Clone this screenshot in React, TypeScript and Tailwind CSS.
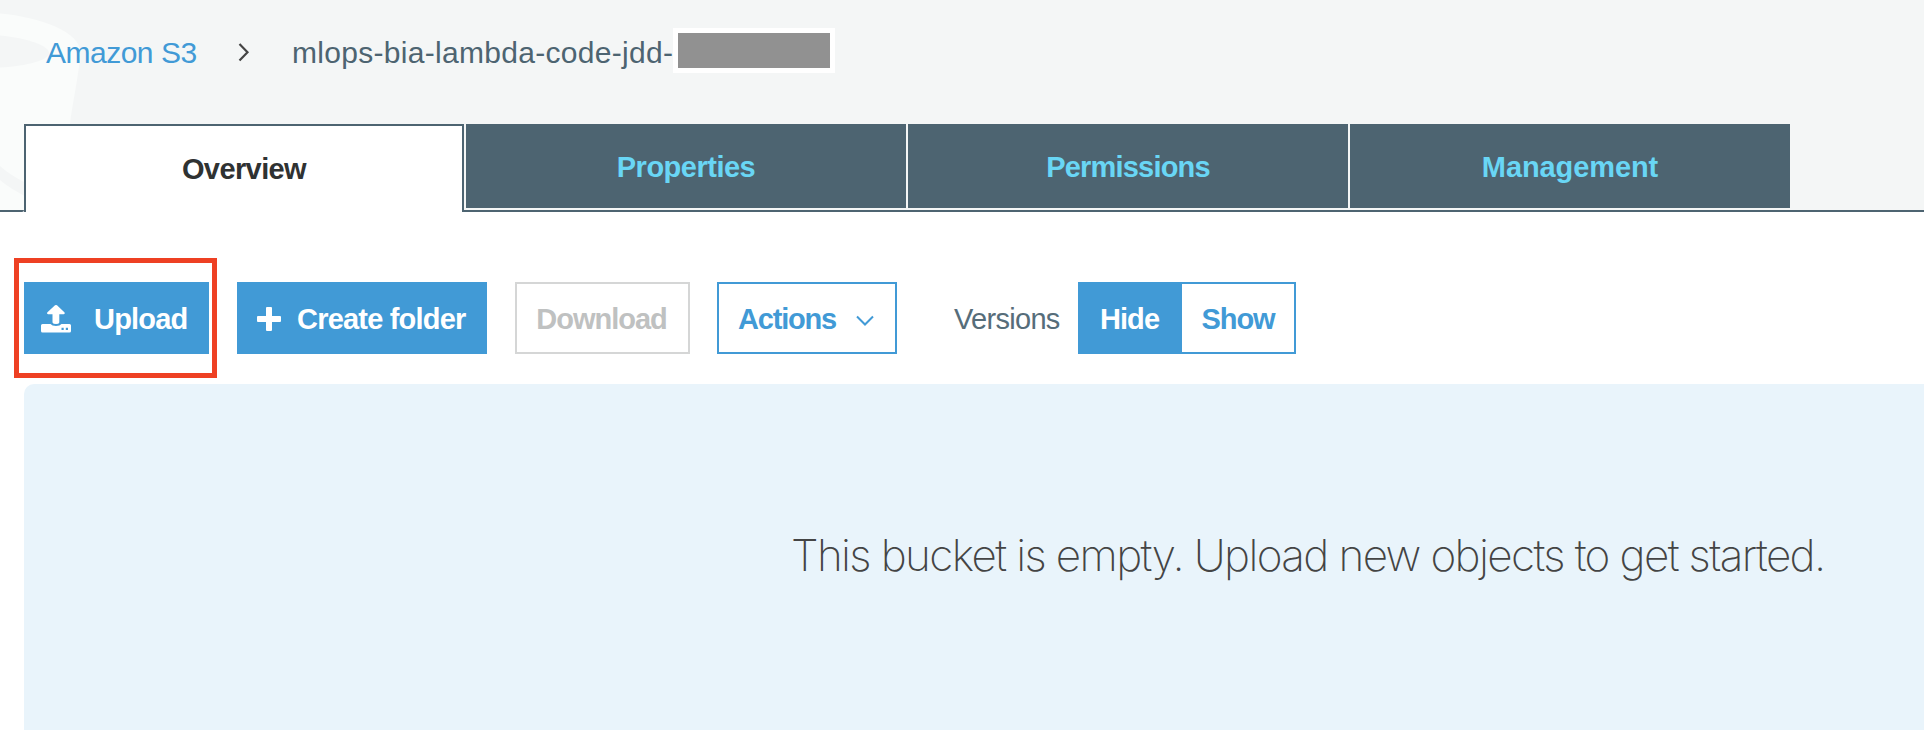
import React from "react";

function Tab({ label, tracking }: { label: string; tracking: string }) {
  return (
    <div
      className={`flex h-[84px] w-[440px] items-center justify-center bg-[#4d6471] pt-px text-[29px] font-bold text-[#69d6f5] ${tracking}`}
    >
      {label}
    </div>
  );
}

export default function App() {
  return (
    <div className="relative h-[730px] w-[1924px] overflow-hidden bg-white font-['Liberation_Sans',Arial,sans-serif] text-[29px] leading-8">
      <header className="relative h-[210px] bg-[#f4f6f6]">
        <svg className="absolute left-0 top-0" width="90" height="210" viewBox="0 0 90 210">
          <path d="M0 13.500C40 17 81 32 80 52C80 70 73 100 70 124V210H0Z" fill="#fafcfb" />
          <path d="M0 35.500C28 38 49 46 49 53C49 60 28 66 0 67.500Z" fill="#f4f6f6" />
          <path d="M0 166C8 173 16 178 26 183V197C16 191 8 187 0 180Z" fill="#f4f6f6" />
        </svg>
        <nav className="relative flex h-[124px] items-start pl-[46px] text-[30px]">
          <a className="mt-[37px] w-[192px] whitespace-nowrap tracking-[-0.5px] text-[#419ad6]">Amazon S3</a>
          <svg className="mt-[43px]" width="12" height="19" viewBox="0 0 12 19" fill="none" stroke="#444" strokeWidth="2.2">
            <path d="M1.5 1L9.5 9.3L1.5 17.6" />
          </svg>
          <span className="ml-[42px] mt-[37px] w-[381px] whitespace-nowrap tracking-[0.3px] text-[#4d6471]">
            mlops-bia-lambda-code-jdd-
          </span>
          <span className="mt-[28px] h-[45px] w-[162px] border-[5px] border-white bg-[#919191]" />
        </nav>
      </header>
      <div className="relative -mt-[86px] flex h-[88px] items-start">
        <div className="h-[88px] w-6 rounded-br-[2px] border-b-2 border-[#4d6471]" />
        <div className="flex h-[88px] w-[440px] items-center justify-center border-x-2 border-t-2 border-[#4d6471] bg-white text-[29px] font-bold tracking-[-0.6px] text-[#2f3232]">
          Overview
        </div>
        <div className="flex h-[88px] flex-1 gap-0.5 border-b-2 border-[#4d6471] pl-0.5">
          <Tab label="Properties" tracking="tracking-[-0.5px]" />
          <Tab label="Permissions" tracking="tracking-[-0.8px]" />
          <Tab label="Management" tracking="tracking-[-0.1px]" />
        </div>
      </div>
      <main className="pl-6 pt-[70px]">
        <div className="flex h-[72px] items-center font-bold">
          <button className="relative flex h-[72px] w-[185px] items-center bg-[#419ad6] pl-[17px] pt-0.5 tracking-[-0.8px] text-white">
            <svg width="31" height="30" viewBox="0 0 31 30" fill="currentColor">
              <path d="M14 1.300Q15 0.500 16 1.300L23.600 8.500Q24.300 10 22.600 10.200H18.300V18.500Q18 20 15 20T11.500 18.500V10.200H7.200Q5.500 10 6.200 8.500Z" />
              <path
                fillRule="evenodd"
                d="M1.500 20H9.500Q11 22 15 22T20.500 20H28.500Q30 20 30 21.500V27Q30 28.500 28.500 28.500H1.500Q0 28.500 0 27V21.500Q0 20 1.500 20ZM20.500 23.800V26H22.700V23.800ZM24.800 23.800V26H27V23.800Z"
              />
            </svg>
            <span className="ml-[22px]">Upload</span>
            <span className="absolute -left-[10px] -top-[24px] h-[120px] w-[203px] border-[5px] border-[#ee4023]" />
          </button>
          <button className="ml-7 flex h-[72px] w-[250px] items-center bg-[#419ad6] pl-[19px] pt-0.5 tracking-[-0.8px] text-white">
            <svg width="26" height="26" viewBox="0 0 26 26" fill="currentColor">
              <path d="M10 2Q10 1 11 1H15Q16 1 16 2V10H24Q25 10 25 11V15Q25 16 24 16H16V24Q16 25 15 25H11Q10 25 10 24V16H2Q1 16 1 15V11Q1 10 2 10H10Z" />
            </svg>
            <span className="ml-[15px] whitespace-nowrap">Create folder</span>
          </button>
          <button className="ml-7 h-[72px] w-[175px] border-2 border-[#d5d6d6] pr-0.5 pt-0.5 tracking-[-1px] text-[#bfc1c1]">Download</button>
          <button className="ml-[27px] flex h-[72px] w-[180px] items-center border-2 border-[#419ad6] pl-[19px] pt-0.5 tracking-[-1.2px] text-[#419ad6]">
            Actions
            <svg className="ml-[20px] mt-[3px]" width="18" height="12" viewBox="0 0 18 12" fill="none" stroke="currentColor" strokeWidth="2">
              <path d="M1 1.500L9 9.500L17 1.500" />
            </svg>
          </button>
          <span className="ml-[57px] w-[124px] pt-0.5 font-normal tracking-[-0.7px] text-[#566d7a]">Versions</span>
          <div className="flex h-[72px] w-[218px] border-2 border-[#419ad6]">
            <button className="w-[102px] bg-[#419ad6] pr-[3px] pt-0.5 tracking-[-0.9px] text-white">Hide</button>
            <button className="w-[112px] pt-0.5 tracking-[-1.1px] text-[#419ad6]">Show</button>
          </div>
        </div>
        <section className="mt-[30px] h-[346px] rounded-tl-[10px] bg-[#e9f4fb] pl-[767px] pt-[143px]">
          <p className="whitespace-nowrap font-['Inter',sans-serif] text-[44px] font-extralight leading-[56px] tracking-[-1.62px] text-[#444]">
            This bucket is empty. Upload new objects to get started.
          </p>
        </section>
      </main>
    </div>
  );
}
